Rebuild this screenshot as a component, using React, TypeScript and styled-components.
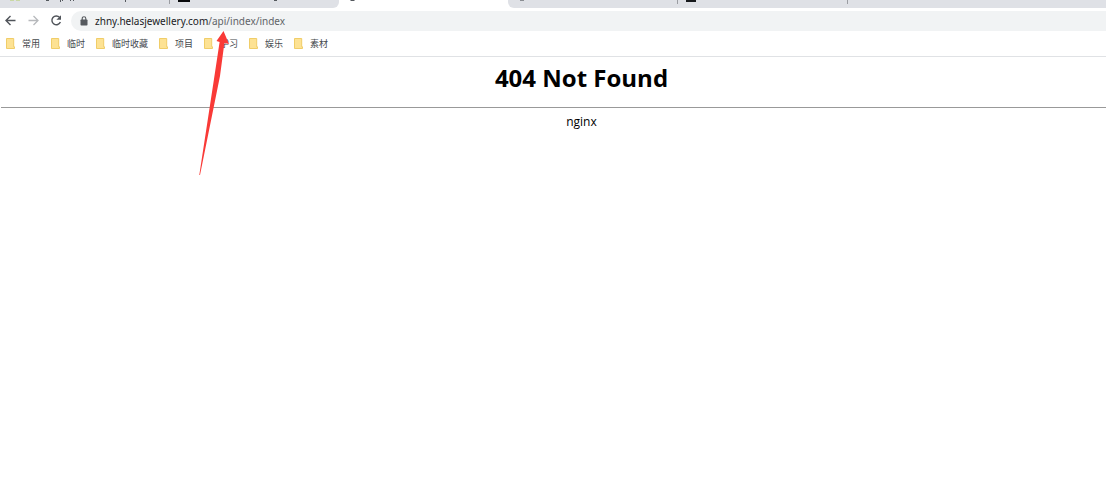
import React from "react";
import styled, { createGlobalStyle } from "styled-components";

const GlobalStyle = createGlobalStyle`
  * { box-sizing: border-box; }
  body { margin: 0; background: #fff; font-family: "Open Sans", "Noto Sans CJK SC", sans-serif; }
`;

const Browser = styled.div`
  position: relative;
  min-height: 100vh;
`;

const TabStrip = styled.div`
  display: flex;
  height: 8px;
  overflow: hidden;
`;

const Tab = styled.button<{ $active?: boolean; $corner?: string }>`
  flex: 0 0 169px;
  display: flex;
  height: 8px;
  padding: 0;
  border: 0;
  border-radius: ${(p) => p.$corner ?? "0"};
  background: ${(p) => (p.$active ? "#fff" : "#dfe1e6")};
`;

const TabRule = styled.span`
  flex: 0 0 1px;
  height: 8px;
  background: linear-gradient(#9b9da2 4px, #dfe1e6 4px);
`;

const TabFill = styled.div`
  flex: 1;
  background: #dfe1e6;
`;

const Toolbar = styled.div`
  display: flex;
  align-items: center;
  height: 24px;
  padding: 1px 0 0 4px;
`;

const NavButton = styled.button`
  display: flex;
  width: 13px;
  height: 13px;
  margin-right: 10px;
  padding: 0;
  border: 0;
  background: none;
`;

const Address = styled.div`
  flex: 1;
  display: flex;
  align-items: center;
  gap: 7px;
  height: 20px;
  margin-left: -2px;
  padding-left: 9px;
  border-radius: 10px 0 0 10px;
  background: #f1f3f4;
`;

const Url = styled.a`
  color: #5f6368;
  font-family: "Noto Sans", sans-serif;
  font-size: 10px;
  line-height: 16px;
  text-decoration: none;
`;

const Host = styled.span`
  color: #202124;
`;

const Bookmarks = styled.nav`
  display: flex;
  align-items: center;
  gap: 11px;
  height: 25px;
  padding: 0 0 1px 6px;
  border-bottom: 1px solid #e0e2e5;
`;

const Bookmark = styled.a`
  display: flex;
  align-items: center;
  gap: 7px;
  color: #45494d;
  font-family: "Noto Sans CJK SC", sans-serif;
  font-size: 9px;
  line-height: 16px;
  text-decoration: none;
`;

const Page = styled.main`
  color: #000;
  text-align: center;
`;

const Title = styled.h1`
  margin: 0;
  padding: 5px 0 13px 57px;
  font-size: 24px;
  line-height: 32px;
`;

const Rule = styled.hr`
  height: 1px;
  margin: 0 0 0 1px;
  border: 0;
  background: #999;
`;

const Server = styled.p`
  margin: 0;
  padding: 5px 0 0 57px;
  font-size: 12px;
  line-height: 18px;
`;

const Pointer = styled.svg`
  position: absolute;
  left: 196px;
  top: 30px;
`;

const folders = ["常用", "临时", "临时收藏", "项目", "学习", "娱乐", "素材"];

const Folder = () => (
  <svg width="9" height="11" viewBox="0 0 9 11" aria-hidden="true">
    <path d="M.5.5h7.2V8.8h.8v1.7h-8z" fill="#fde293" stroke="#f0cd68" />
  </svg>
);

const TabMarks = ({ children }: { children: React.ReactNode }) => (
  <svg width="169" height="8" viewBox="0 0 169 8" aria-hidden="true">
    {children}
  </svg>
);

export default function App() {
  return (
    <Browser>
      <GlobalStyle />
      <TabStrip>
        <Tab aria-label="First tab">
          <TabMarks>
            <path d="M10 0h4v1h-4zM16 0h4v1h-4z" fill="#c9d8a4" />
            <path d="M46 0h3v1h-3zM60 0h1v2h-1zM62 0h1v1h-1zM70 0h1v1h-1zM73 0h1v1h-1zM125 0h1v2h-1z" fill="#55595e" />
          </TabMarks>
        </Tab>
        <TabRule />
        <Tab $corner="0 0 6px 0" aria-label="Second tab">
          <TabMarks>
            <path d="M8 0h12v2H8z" fill="#08090b" />
            <path d="M104 0h3v1h-3z" fill="#55595e" />
          </TabMarks>
        </Tab>
        <Tab $active aria-label="404 Not Found">
          <TabMarks><path d="M11 0h5l-1 1h-3z" fill="#55595e" /></TabMarks>
        </Tab>
        <Tab $corner="0 0 0 6px" aria-label="Fourth tab">
          <TabMarks><path d="M12 0h4v1h-4z" fill="#8b8e93" /></TabMarks>
        </Tab>
        <TabRule />
        <Tab aria-label="Fifth tab">
          <TabMarks><path d="M8 0h10v2H8z" fill="#17191c" /></TabMarks>
        </Tab>
        <TabRule />
        <TabFill />
      </TabStrip>
      <Toolbar>
        <NavButton aria-label="Back">
          <svg width="13" height="13" viewBox="0 0 13 13" fill="none" stroke="#50545a" strokeWidth="1.4"><path d="M11.5 6.5H2M6.5 2 2 6.5 6.5 11" /></svg>
        </NavButton>
        <NavButton aria-label="Forward">
          <svg width="13" height="13" viewBox="0 0 13 13" fill="none" stroke="#b7b9bc" strokeWidth="1.3"><path d="M1.5 6.5H11M6.5 2 11 6.5 6.5 11" /></svg>
        </NavButton>
        <NavButton aria-label="Reload">
          <svg width="13" height="13" viewBox="0 0 13 13" fill="none" stroke="#50545a" strokeWidth="1.4"><path d="M9.6 3.4A4.4 4.4 0 1 0 10.4 8" /><path d="M11 1.2v4.6H6.4z" fill="#50545a" stroke="none" /></svg>
        </NavButton>
        <Address>
          <svg width="8" height="10" viewBox="0 0 8 10" aria-hidden="true"><rect x=".5" y="3.5" width="7" height="6" rx=".8" fill="#55595e" /><path d="M2.2 4V2.5a1.8 1.8 0 0 1 3.6 0V4" fill="none" stroke="#55595e" strokeWidth="1.1" /></svg>
          <Url href="#"><Host>zhny.helasjewellery.com</Host>/api/index/index</Url>
        </Address>
      </Toolbar>
      <Bookmarks aria-label="Bookmarks">
        {folders.map((name) => (
          <Bookmark href="#" key={name}><Folder />{name}</Bookmark>
        ))}
      </Bookmarks>
      <Page>
        <Title>404 Not Found</Title>
        <Rule />
        <Server>nginx</Server>
      </Page>
      <Pointer width="36" height="148" viewBox="0 0 36 148" aria-hidden="true">
        <path d="M27.5 1 33 14l-4.6-1L24 46 4 145h-.7L18 49l5.6-37L20.5 11z" fill="#f93a37" />
      </Pointer>
    </Browser>
  );
}
